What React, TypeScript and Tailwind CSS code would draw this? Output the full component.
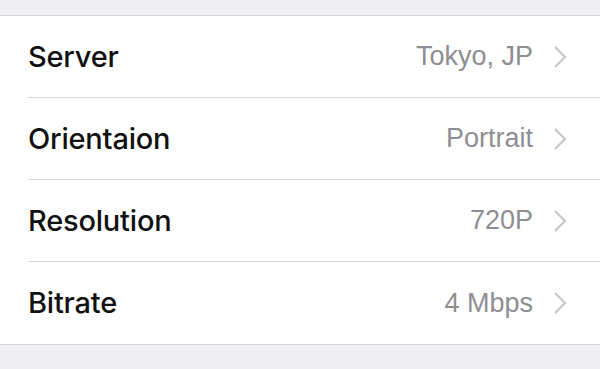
import React from "react";

const rows = [
  { label: "Server", value: "Tokyo, JP" },
  { label: "Orientaion", value: "Portrait" },
  { label: "Resolution", value: "720P" },
  { label: "Bitrate", value: "4 Mbps" },
];

function Chevron() {
  return (
    <svg width="14" height="24" viewBox="0 0 14 24" className="shrink-0">
      <path d="M2 2 L12 12 L2 22" fill="none" stroke="#c7c7cc" strokeWidth="2.2" strokeLinecap="butt" strokeLinejoin="miter" />
    </svg>
  );
}

export default function App() {
  return (
    <div className="w-[600px] h-[369px] bg-[#efeff4] pt-[15px] overflow-hidden" style={{ fontFamily: '"Liberation Sans", Arial, sans-serif' }}>
      <div className="bg-white border-t border-b border-[#d6d6da]">
        {rows.map((r, i) => (
          <div key={r.label} className="pl-[28px]">
            <div className={`flex items-center h-[82px] pr-[33px] ${i < rows.length - 1 ? "border-b border-[#d6d6da]" : ""}`}>
              <span className="text-[29px] font-medium text-[#111] tracking-[-0.2px] font-['Inter',sans-serif]">{r.label}</span>
              <span className="ml-auto text-[27px] text-[#8e8e93] mr-[20px]">{r.value}</span>
              <Chevron />
            </div>
          </div>
        ))}
      </div>
    </div>
  );
}
